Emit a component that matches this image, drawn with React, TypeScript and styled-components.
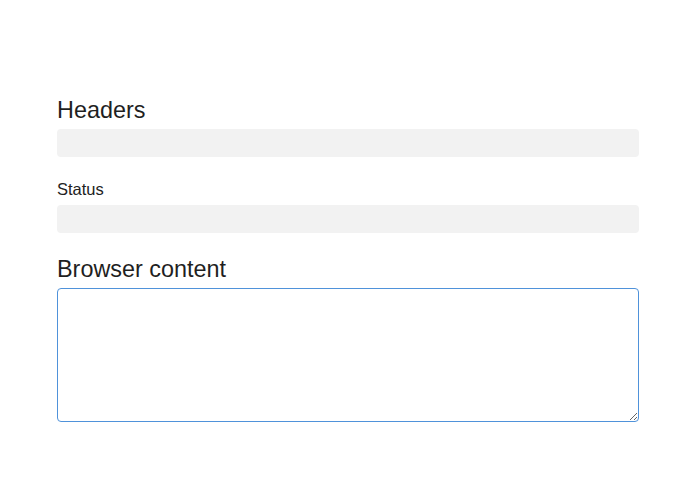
import React from "react";
import styled, { createGlobalStyle } from "styled-components";

const Global = createGlobalStyle`
  html, body { margin: 0; padding: 0; background: #ffffff; }
  body { font-family: "Liberation Sans", Arial, Helvetica, sans-serif; color: #222; }
`;

const Page = styled.main`
  box-sizing: border-box;
  width: 695px;
  padding: 96px 56px 0 57px;
  display: flex;
  flex-direction: column;
`;

const Heading = styled.h2<{ $top?: number }>`
  margin: ${(p) => p.$top ?? 0}px 0 5px 0;
  font-size: 23.4px;
  line-height: 28px;
  font-weight: 400;
  color: #1f1f1f;
`;

const Label = styled.div`
  margin: 22px 0 6px 0;
  font-size: 16.5px;
  line-height: 20px;
  color: #222;
`;

const Field = styled.div`
  height: 28px;
  border-radius: 4px;
  background: #f2f2f2;
`;

const Content = styled.textarea`
  box-sizing: border-box;
  display: block;
  width: 100%;
  height: 134px;
  margin: 0;
  border: 1px solid #4f92da;
  border-radius: 4px;
  outline: none;
  background: #fff;
  font-family: "Liberation Sans", Arial, sans-serif;
  font-size: 14px;
  resize: both;
`;

export default function App() {
  return (
    <>
      <Global />
      <Page>
        <Heading>Headers</Heading>
        <Field />
        <Label>Status</Label>
        <Field />
        <Heading $top={22}>Browser content</Heading>
        <Content />
      </Page>
    </>
  );
}
